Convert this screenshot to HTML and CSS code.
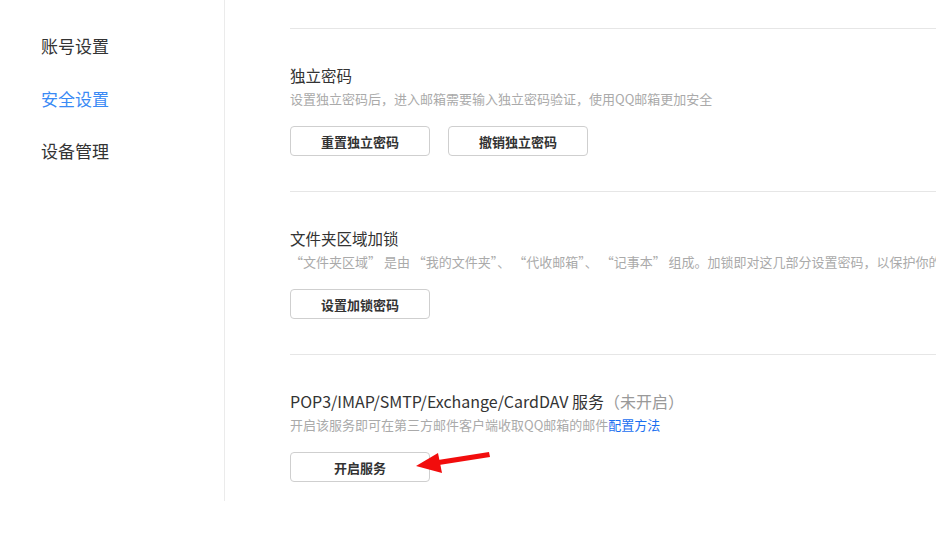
FILE: index.html
```html
<!DOCTYPE html>
<html lang="zh-CN">
<head>
  <meta charset="UTF-8">
  <title>安全设置</title>
  <link rel="stylesheet" href="styles.css">
</head>
<body>
  <div class="layout">
    <nav class="sidebar">
      <a class="nav-item">账号设置</a>
      <a class="nav-item active">安全设置</a>
      <a class="nav-item">设备管理</a>
    </nav>

    <main class="content">
      <section class="setting">
        <h3 class="setting-title">独立密码</h3>
        <p class="setting-desc">设置独立密码后，进入邮箱需要输入独立密码验证，使用QQ邮箱更加安全</p>
        <div class="actions">
          <button class="btn">重置独立密码</button>
          <button class="btn">撤销独立密码</button>
        </div>
      </section>

      <section class="setting">
        <h3 class="setting-title">文件夹区域加锁</h3>
        <p class="setting-desc">“文件夹区域” 是由 “我的文件夹”、 “代收邮箱”、 “记事本” 组成。加锁即对这几部分设置密码，以保护你的隐私安全</p>
        <div class="actions">
          <button class="btn">设置加锁密码</button>
        </div>
      </section>

      <section class="setting last">
        <h3 class="setting-title">POP3/IMAP/SMTP/Exchange/CardDAV 服务<span class="state">（未开启）</span></h3>
        <p class="setting-desc">开启该服务即可在第三方邮件客户端收取QQ邮箱的邮件<a class="link">配置方法</a></p>
        <div class="actions">
          <button class="btn">开启服务</button>
        </div>
      </section>
    </main>
  </div>

  <!-- annotation arrow pointing at the button -->
  <svg class="arrow" width="80" height="24" viewBox="0 0 80 24">
    <path d="M76 1 L77 6 L26 14 L25 9 Z" fill="#f20d0d"/>
    <path d="M3 15 L25 2 L29 22 Z" fill="#f20d0d"/>
  </svg>
</body>
</html>
```

FILE: styles.css
```css
body {
  margin: 0;
  background-color: #fff;
  font-family: "Noto Sans CJK SC", "Microsoft YaHei", sans-serif;
  color: #333;
  overflow: hidden;
}

.layout {
  display: flex;
  align-items: flex-start;
  width: 1200px;
}

.sidebar {
  width: 225px;
  height: 501px;
  border-right: 1px solid #ebebeb;
  padding-top: 20px;
  box-sizing: border-box;
  display: flex;
  flex-direction: column;
}

.nav-item {
  padding-left: 41px;
  font-size: 17px;
  line-height: 52.5px;
  color: #333;
  cursor: pointer;
}

.nav-item.active {
  color: #3a8af5;
}

.content {
  flex: 1;
  padding: 28px 0 0 65px;
}

.setting {
  border-top: 1px solid #e6e6e6;
  padding: 35px 0 35px;
  white-space: nowrap;
}

.setting.last {
  padding-bottom: 19px;
}

.setting-title {
  margin: 0;
  font-size: 15.5px;
  font-weight: normal;
  line-height: 22px;
  color: #333;
}

.setting.last .setting-title {
  font-size: 16px;
}

.state {
  color: #999;
}

.setting-desc {
  margin: 3px 0 0;
  font-size: 13px;
  line-height: 20px;
  color: #aaa;
}

.link {
  color: #1a6ff0;
  cursor: pointer;
}

.actions {
  display: flex;
  gap: 18px;
  margin-top: 17px;
}

.btn {
  width: 140px;
  height: 30px;
  background-color: #fff;
  border: 1px solid #cfcfcf;
  border-radius: 4px;
  font-family: inherit;
  font-size: 13px;
  font-weight: bold;
  color: #333;
  cursor: pointer;
}

.arrow {
  position: absolute;
  left: 413px;
  top: 451px;
}
```
